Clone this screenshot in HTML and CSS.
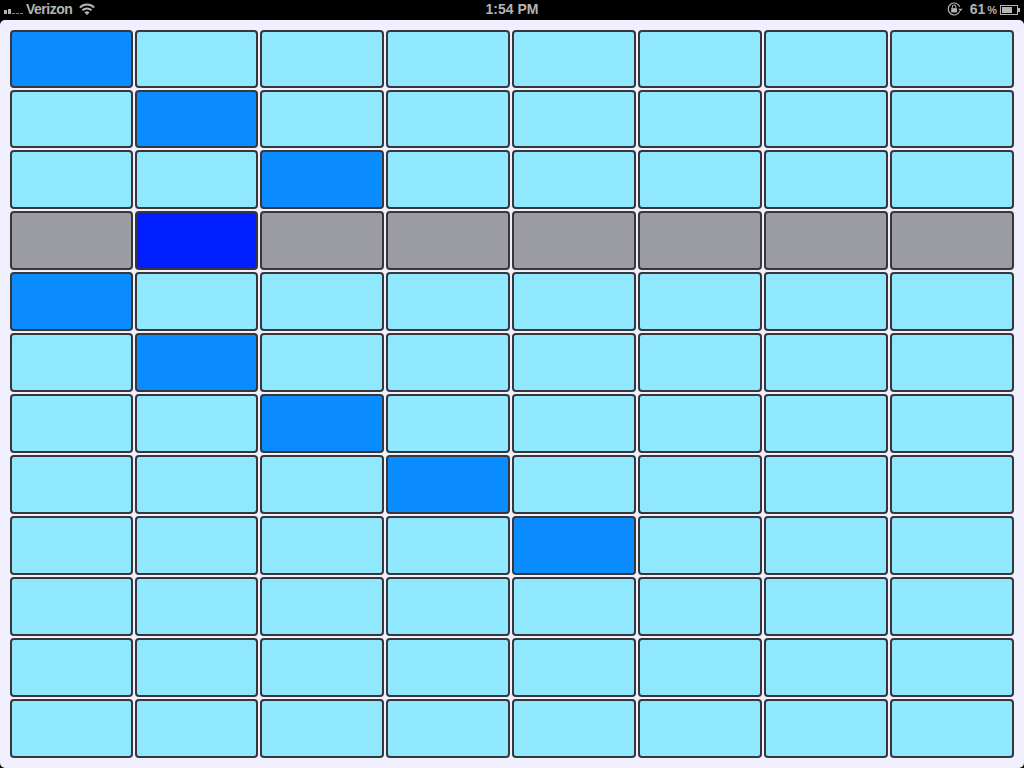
FILE: index.html
```html
<!DOCTYPE html>
<html lang="en">
<head>
<meta charset="utf-8">
<title>Grid</title>
<link rel="stylesheet" href="styles.css">
</head>
<body>
<div class="status">
  <div class="status-left">
    <div class="signal"><i class="b1"></i><i class="b2"></i><i class="b3"></i><i class="b4"></i><i class="b5"></i></div>
    <span class="carrier">Verizon</span>
    <svg class="wifi" width="16" height="12" viewBox="0 0 16 12"><g fill="none" stroke="#b4b4b4" stroke-width="2"><path d="M.8 4.6C5 .6 11 .6 15.2 4.6"/><path d="M3.4 7.3C6 4.9 10 4.9 12.6 7.3"/></g><path d="M5.4 9.4C7 8 9 8 10.6 9.4L8 12Z" fill="#b4b4b4"/></svg>
  </div>
  <div class="time">1:54 PM</div>
  <div class="status-right">
    <svg class="lock" width="16" height="14" viewBox="0 0 17 15"><path d="M13.6 9.8A6.4 6.4 0 1 1 13.6 5.2" fill="none" stroke="#b4b4b4" stroke-width="1.3"/><path d="M11.8 7.2h5l-2.5 2.8z" fill="#b4b4b4"/><rect x="4.4" y="6.6" width="6.2" height="4.6" fill="#b4b4b4"/><path d="M5.6 6.6V5.2a1.9 1.9 0 0 1 3.8 0v1.4" fill="none" stroke="#b4b4b4" stroke-width="1.1"/></svg>
    <span class="pct">61 <span class="pct-sign">%</span></span>
    <div class="battery"><div class="level"></div></div>
    <div class="nub"></div>
  </div>
</div>
<main class="screen">
  <div class="grid" id="grid">
    <div class="cell on"></div><div class="cell"></div><div class="cell"></div><div class="cell"></div><div class="cell"></div><div class="cell"></div><div class="cell"></div><div class="cell"></div>
    <div class="cell"></div><div class="cell on"></div><div class="cell"></div><div class="cell"></div><div class="cell"></div><div class="cell"></div><div class="cell"></div><div class="cell"></div>
    <div class="cell"></div><div class="cell"></div><div class="cell on"></div><div class="cell"></div><div class="cell"></div><div class="cell"></div><div class="cell"></div><div class="cell"></div>
    <div class="cell off"></div><div class="cell cur"></div><div class="cell off"></div><div class="cell off"></div><div class="cell off"></div><div class="cell off"></div><div class="cell off"></div><div class="cell off"></div>
    <div class="cell on"></div><div class="cell"></div><div class="cell"></div><div class="cell"></div><div class="cell"></div><div class="cell"></div><div class="cell"></div><div class="cell"></div>
    <div class="cell"></div><div class="cell on"></div><div class="cell"></div><div class="cell"></div><div class="cell"></div><div class="cell"></div><div class="cell"></div><div class="cell"></div>
    <div class="cell"></div><div class="cell"></div><div class="cell on"></div><div class="cell"></div><div class="cell"></div><div class="cell"></div><div class="cell"></div><div class="cell"></div>
    <div class="cell"></div><div class="cell"></div><div class="cell"></div><div class="cell on"></div><div class="cell"></div><div class="cell"></div><div class="cell"></div><div class="cell"></div>
    <div class="cell"></div><div class="cell"></div><div class="cell"></div><div class="cell"></div><div class="cell on"></div><div class="cell"></div><div class="cell"></div><div class="cell"></div>
    <div class="cell"></div><div class="cell"></div><div class="cell"></div><div class="cell"></div><div class="cell"></div><div class="cell"></div><div class="cell"></div><div class="cell"></div>
    <div class="cell"></div><div class="cell"></div><div class="cell"></div><div class="cell"></div><div class="cell"></div><div class="cell"></div><div class="cell"></div><div class="cell"></div>
    <div class="cell"></div><div class="cell"></div><div class="cell"></div><div class="cell"></div><div class="cell"></div><div class="cell"></div><div class="cell"></div><div class="cell"></div>
  </div>
</main>
</body>
</html>
```
FILE: styles.css
```css
* { box-sizing: border-box; }
html, body { margin: 0; height: 768px; overflow: hidden; background: #000; }
body { display: flex; flex-direction: column; font-family: "Liberation Sans", Arial, sans-serif; }
.status {
  height: 20px; flex: none; background: #000; color: #b4b4b4;
  display: grid; grid-template-columns: 1fr auto 1fr; align-items: center;
  font-size: 14px; font-weight: bold; padding: 0 4px 2px;
}
.status-left { display: flex; align-items: center; }
.signal { display: flex; align-items: flex-end; gap: 1px; width: 19px; height: 9px; margin-right: 3px; }
.signal i { width: 3px; background: #b4b4b4; display: block; }
.signal .b1 { height: 4px; }
.signal .b2 { height: 5px; }
.signal .b3, .signal .b4, .signal .b5 { height: 1px; background: #808080; }
.carrier { letter-spacing: -0.5px; margin-right: 7px; }
.time { text-align: center; }
.status-right { display: flex; align-items: center; justify-content: flex-end; }
.lock { margin-right: 7px; }
.pct { margin-right: 3px; word-spacing: -2px; font-size: 14px; white-space: pre; }
.pct-sign { font-size: 11px; word-spacing: 0; }
.battery { width: 18px; height: 10px; margin-top: 1px; border: 1px solid #b4b4b4; padding: 1px; }
.level { width: 10px; height: 100%; background: #b4b4b4; }
.nub { width: 2px; height: 4px; margin-top: 1px; background: #b4b4b4; }
.screen { flex: 1; background: #efeffd; border-radius: 5px; padding: 10px; }
.grid {
  display: grid; gap: 2px;
  grid-template-columns: 123px 123px 124px 124px 124px 124px 124px 124px;
  grid-template-rows: 58px 58px 59px 59px 59px 59px 59px 59px 59px 59px 59px 59px;
}
.cell { background: #90e8ff; border: 2px solid #36363b; border-radius: 4px; }
.on { background: #0a8cff; }
.off { background: #9a9ca2; }
.cur { background: #001eff; }
```
